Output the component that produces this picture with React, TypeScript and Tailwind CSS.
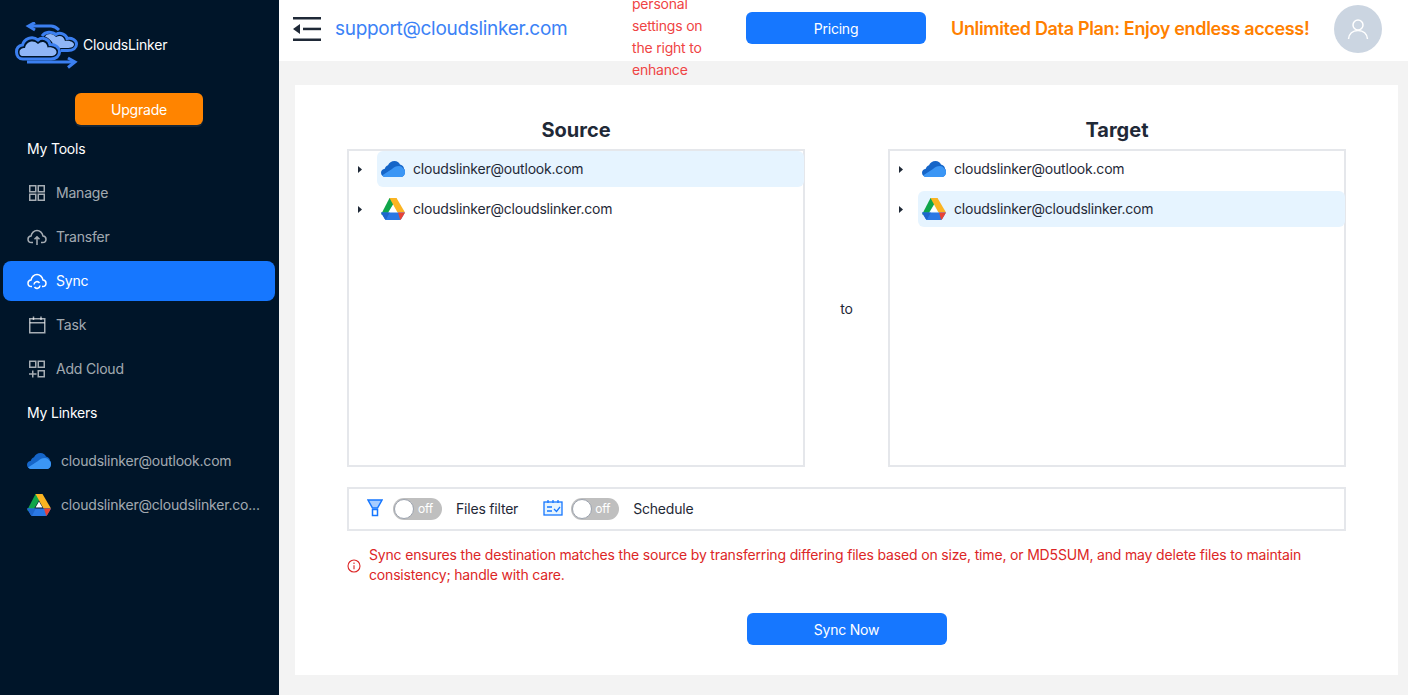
import React from "react";

const OneDrive = ({ className = "" }: { className?: string }) => (
  <svg viewBox="0 0 24 16" className={className}>
    <path d="M4.500 16C2 16 0 14.200 0 11.800 0 9.600 1.700 8 3.800 7.800 4.300 5.800 5.500 4.700 7 4.300 8 1.700 10.500 0 13.500 0 16.200 0 18 1.500 19 3.500 21.800 4 23 6 23 7.800 23.700 8.500 24 9.500 24 11 24 14 22 16 19.500 16Z" fill="#1565c8" />
    <path d="M1 14.500L11 8C13 6 15 5 18 5 20 5 21.500 6.300 22.500 7.800 23.500 8.200 24 9.500 24 11 24 14 22 16 19.500 16H4.500C3 16 1.800 15.400 1 14.500Z" fill="#3b96f5" />
  </svg>
);

const GDrive = ({ className = "" }: { className?: string }) => (
  <svg viewBox="0 0 24 22" className={className}>
    <path d="M8.500 0h7L12 6.500 6 16.500H0z" fill="#10a64a" />
    <path d="M8.500 0h7L24 14.500h-7.500z" fill="#fbb422" />
    <path d="M6 14.500h18l-3.800 6.500a2 2 0 0 1-1.700 1H5.500a2 2 0 0 1-1.700-1L0 14.500z" fill="#2b78e4" />
    <path d="M17 14.500h7l-3.800 6.500-1 1z" fill="#e94235" />
    <path d="M12 7.500L15.500 13.500H8.500z" fill="#ffffff" />
    <path d="M0 14.500l3.800 6.500 1 1 4-7.500z" fill="#1f66cc" />
  </svg>
);

const frontCloud = "M8 37C3.500 37 1.500 33.500 1.500 30 1.500 26 4 23.500 7.500 23 9 17 17 13 23 18 27 14.500 34 17 35 22.500 40 22 44.500 25.500 44.500 30 44.500 34 41 37 36 37Z";
const backCloud = "M27 14C30 9.500 37 9 41 12.500 45 10 51 12 52 16.500 57 15.500 61.500 18.500 61.500 22 61.500 26 58 28.500 53 28.500H46";

const Logo = () => (
  <svg viewBox="0 0 64 48" className="h-12 w-16 shrink-0">
    <path d="M14 4H36C40 4 42 6 44 8" stroke="#3b7ff0" strokeWidth="3" fill="none" />
    <path d="M20 .5L13.500 4 20 8" stroke="#3b7ff0" strokeWidth="3" fill="none" />
    <path d={backCloud} fill="#001529" stroke="#3b7ff0" strokeWidth="3" />
    <path d="M30 14.500C33 11 38 11.500 41 15 45 12.500 49 14.500 50 19 54 18 59 20 59 22.500 59 25 56 26 52 26H40C38 20 34 16 30 14.500Z" fill="#8fb6f7" />
    <path d={frontCloud} fill="#001529" stroke="#3b7ff0" strokeWidth="3" />
    <path d="M8 34C5 34 4.500 32 4.500 30 4.500 27.500 7 26 10 26 11 20 18 17 23 22 27 18 32 20 32.500 25.500 37 24.500 41.500 27 41.500 30 41.500 32.500 39 34 36 34Z" fill="#8fb6f7" />
    <path d="M12 40H59" stroke="#3b7ff0" strokeWidth="3" fill="none" />
    <path d="M53 36L60 40 53 45.500" stroke="#3b7ff0" strokeWidth="3" fill="none" />
  </svg>
);

const s = { fill: "none", stroke: "currentColor", strokeWidth: 1.500 } as const;

const ManageIcon = () => (
  <svg viewBox="0 0 20 20" className="h-5 w-5" {...s}>
    <rect x="2.750" y="2.750" width="6" height="6" />
    <rect x="11.250" y="2.750" width="6" height="6" />
    <rect x="2.750" y="11.250" width="6" height="6" />
    <rect x="11.250" y="11.250" width="6" height="6" />
  </svg>
);
const TransferIcon = () => (
  <svg viewBox="0 0 20 20" className="h-5 w-5" {...s}>
    <path d="M6 15.500H4.500C2.500 15.500 1 14 1 12.200c0-1.800 1.400-3.200 3.100-3.300C4.500 6 7 3.500 10 3.500s5.500 2.500 5.900 5.400c1.700.1 3.100 1.500 3.100 3.300 0 1.800-1.500 3.300-3.500 3.300H14" />
    <path d="M10 18v-8M7.500 12.300L10 9.800l2.500 2.500" />
  </svg>
);
const SyncIcon = () => (
  <svg viewBox="0 0 20 20" className="h-5 w-5" {...s}>
    <path d="M5 15.500H4.500C2.500 15.500 1 14 1 12.200c0-1.800 1.400-3.200 3.100-3.300C4.500 6 7 3.500 10 3.500s5.500 2.500 5.900 5.400c1.700.1 3.100 1.500 3.100 3.300 0 1.800-1.500 3.300-3.500 3.300H15" />
    <path d="M7 13.500a3 3 0 0 1 5.500-1.500M13 14.500a3 3 0 0 1-5.500 1.500" />
  </svg>
);
const TaskIcon = () => (
  <svg viewBox="0 0 20 20" className="h-5 w-5" {...s}>
    <rect x="2.750" y="3.750" width="15" height="14" />
    <path d="M2.750 7.750h15M6.500 1.500v3.500M14 1.500v3.500" />
  </svg>
);
const AddCloudIcon = () => (
  <svg viewBox="0 0 20 20" className="h-5 w-5" {...s}>
    <rect x="2.750" y="2.250" width="6" height="6" />
    <rect x="11.250" y="2.250" width="6" height="6" />
    <rect x="11.250" y="11.750" width="6" height="6" />
    <path d="M5.750 11.500v7M2 15h7.500" />
  </svg>
);

const NavItem = ({ icon, label, active }: { icon: React.ReactNode; label: string; active?: boolean }) => (
  <div
    className={`mr-[4px] ml-[3px] flex h-10 items-center gap-[9px] rounded-lg pl-6 text-sm ${
      active ? "bg-[#1677ff] text-white" : "text-[#ffffffa6]"
    }`}
  >
    {icon}
    <span>{label}</span>
  </div>
);

const Caret = () => (
  <svg viewBox="0 0 4 7" className="h-[7px] w-1 shrink-0 fill-[#1f2937]">
    <path d="M0 0l4 3.500-4 3.500z" />
  </svg>
);

const TreeRow = ({ icon, label, active }: { icon: React.ReactNode; label: string; active?: boolean }) => (
  <div className="flex h-9 items-center">
    <div className="flex w-[28px] shrink-0 justify-start pl-[9px]">
      <Caret />
    </div>
    <div className={`-mr-px flex h-9 flex-1 items-center gap-2 rounded-md pl-1 text-sm text-[#1f2937] ${active ? "bg-[#e6f4ff]" : ""}`}>
      <span className="flex w-6 justify-center">{icon}</span>
      <span>{label}</span>
    </div>
  </div>
);

const TreePanel = ({ title, active }: { title: string; active: number }) => (
  <div className="flex w-[458px] flex-col">
    <div className="flex h-[38px] items-end justify-center pb-[5px] text-xl leading-7 font-bold tracking-normal text-[#1f2937]">{title}</div>
    <div className="flex h-[318px] flex-col gap-1 border-2 border-[#e5e7eb]">
      <TreeRow active={active === 0} icon={<OneDrive className="h-4 w-6" />} label="cloudslinker@outlook.com" />
      <TreeRow active={active === 1} icon={<GDrive className="h-[22px] w-6" />} label="cloudslinker@cloudslinker.com" />
    </div>
  </div>
);

const Toggle = ({ w }: { w: string }) => (
  <div className={`relative flex h-[22px] ${w} items-center justify-end rounded-full bg-[#bfbfbf] pr-[9px] text-xs text-white`}>
    <span className="absolute top-[1px] left-[1px] h-5 w-5 rounded-full border border-[#9ca3af] bg-white" />
    off
  </div>
);

export default function App() {
  return (
    <div className="flex h-[695px] w-[1408px] overflow-hidden font-['Inter',sans-serif] text-sm tracking-[-0.2px]">
      <aside className="flex w-[279px] shrink-0 flex-col bg-[#001529]">
        <div className="flex h-[93px] items-start pt-[22px] pl-[15px]">
          <Logo />
          <span className="mt-[13px] ml-[4px] text-sm text-white">CloudsLinker</span>
        </div>
        <div className="flex pl-[75px]">
          <button className="h-8 w-32 rounded-md bg-[#ff8400] pt-px text-sm text-white shadow-[0_2px_0_rgba(255,255,255,0.08)]">Upgrade</button>
        </div>
        <div className="mt-[4px] flex h-10 items-center pl-[27px] text-sm text-white">My Tools</div>
        <div className="mt-[4px] flex flex-col gap-1">
          <NavItem icon={<ManageIcon />} label="Manage" />
          <NavItem icon={<TransferIcon />} label="Transfer" />
          <NavItem active icon={<SyncIcon />} label="Sync" />
          <NavItem icon={<TaskIcon />} label="Task" />
          <NavItem icon={<AddCloudIcon />} label="Add Cloud" />
        </div>
        <div className="mt-1 flex h-10 items-center pl-[27px] text-sm text-white">My Linkers</div>
        <div className="mt-[8px] flex flex-col gap-1">
          <div className="mx-[3px] flex h-10 items-center gap-[10px] pl-6 text-[#ffffffa6]">
            <OneDrive className="h-4 w-6" />
            <span>cloudslinker@outlook.com</span>
          </div>
          <div className="mx-[3px] flex h-10 items-center gap-[10px] pl-6 text-[#ffffffa6]">
            <GDrive className="h-[22px] w-6" />
            <span className="whitespace-nowrap">cloudslinker@cloudslinker.co...</span>
          </div>
        </div>
      </aside>

      <main className="flex min-w-0 flex-1 flex-col bg-[#f3f3f3]">
        <header className="flex h-[61px] shrink-0 items-center bg-white pb-1 pl-[14px]">
          <svg viewBox="0 0 28 24" className="h-6 w-7 shrink-0 fill-[#1f2937]">
            <rect x="0" y="0" width="28" height="2.500" />
            <rect x="10" y="10.700" width="18" height="2.500" />
            <rect x="0" y="21.500" width="28" height="2.500" />
            <path d="M7 7v10L0 12z" />
          </svg>
          <span className="ml-[14px] w-[297px] shrink-0 text-[19px] tracking-[-0.3px] text-[#3b82f6]">support@cloudslinker.com</span>
          <div className="relative z-10 mt-[17px] w-[90px] shrink-0 text-sm leading-[22px] text-[#ef4444]">
            personal settings on the right to enhance
          </div>
          <button className="mb-px ml-[24px] h-8 w-[180px] shrink-0 rounded-md bg-[#1677ff] pt-px text-sm text-white">Pricing</button>
          <span className="ml-[25px] shrink-0 text-lg font-semibold tracking-[-0.33px] text-[#ff8000]">Unlimited Data Plan: Enjoy endless access!</span>
          <div className="ml-[25px] flex h-12 w-12 shrink-0 items-center justify-center rounded-full bg-[#cbd5e1]">
            <svg viewBox="0 0 24 24" className="h-6 w-6" fill="none" stroke="white" strokeWidth="1.500">
              <circle cx="12" cy="8" r="5" />
              <path d="M2.500 22c.5-5 4-8.500 9.500-8.500s9 3.500 9.500 8.500" />
            </svg>
          </div>
        </header>
        <div className="flex-1 px-4 pt-6 pb-5 pr-[10px]">
          <div className="flex h-[590px] flex-col bg-white px-[52px] pt-[26px]">
            <div className="flex items-center justify-between">
              <TreePanel title="Source" active={0} />
              <span className="mt-[40px] text-sm text-[#1f2937]">to</span>
              <TreePanel title="Target" active={1} />
            </div>
            <div className="mt-5 flex h-11 items-center border-2 border-[#e5e7eb] pl-[18px] text-[#1f2937]">
              <svg viewBox="0 0 16 18" className="mb-[3px] h-[18px] w-4 shrink-0" stroke="#1677ff" strokeWidth="1.500">
                <path d="M1 1h14l-4.500 8H5.500z" fill="#a6ccff" />
                <rect x="5.500" y="10.500" width="5" height="6" fill="none" />
              </svg>
              <span className="ml-[10px]"><Toggle w="w-[49px]" /></span>
              <span className="ml-[14px]">Files filter</span>
              <svg viewBox="0 0 20 18" className="mb-[3px] ml-[25px] h-[18px] w-5 shrink-0" fill="#e6f4ff" stroke="#1677ff" strokeWidth="1.300">
                <rect x="1" y="3" width="18" height="13" />
                <path d="M5 1v3M10 1v3M15 1v3M4 8h5M4 12h5M11 10l2.500 2.500L17 8" fill="none" />
              </svg>
              <span className="ml-[8px]"><Toggle w="w-12" /></span>
              <span className="ml-[14px]">Schedule</span>
            </div>
            <div className="mt-[14px] flex items-center text-sm leading-5 tracking-[-0.17px] text-[#dc2626]">
              <svg viewBox="0 0 14 14" className="mt-[1px] h-3.5 w-3.5 shrink-0" fill="none" stroke="currentColor" strokeWidth="1.100">
                <circle cx="7" cy="7" r="6" />
                <path d="M7 6.200v4M7 3.600v1.300" />
              </svg>
              <p className="ml-2">
                Sync ensures the destination matches the source by transferring differing files based on size, time, or MD5SUM, and may delete files to maintain consistency; handle with care.
              </p>
            </div>
            <div className="mt-7 flex justify-center">
              <button className="h-8 w-[200px] rounded-md bg-[#1677ff] pt-px text-sm text-white">Sync Now</button>
            </div>
          </div>
        </div>
      </main>
    </div>
  );
}
